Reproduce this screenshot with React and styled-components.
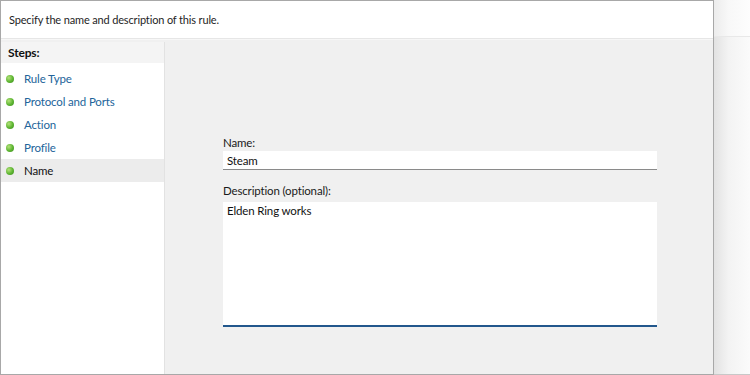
import React from "react";
import styled, { createGlobalStyle } from "styled-components";

const Global = createGlobalStyle`
  html, body { margin: 0; padding: 0; background: #fff; }
  body { font-family: "Lato", "Noto Sans", sans-serif; font-size: 11px; letter-spacing: -0.15px; color: #1a1a1a; }
`;

const Screen = styled.div`
  width: 750px;
  height: 375px;
  display: flex;
  overflow: hidden;
  box-sizing: border-box;
`;

const Dialog = styled.div`
  width: 714px;
  height: 375px;
  box-sizing: border-box;
  border: 1px solid #a8a8a8;
  display: flex;
  flex-direction: column;
  background: #f0f0f0;
`;

const Header = styled.div`
  height: 37px;
  flex: none;
  background: #fff;
  border-bottom: 1px solid #e6e6e6;
  box-shadow: 0 1px 0 #f7f7f7;
  display: flex;
  align-items: center;
  padding-left: 8px;
  color: #1e1e1e;
  font-size: 11px;
`;

const Body = styled.div`
  flex: 1;
  display: flex;
  padding-top: 3px;
  min-height: 0;
`;

const Steps = styled.div`
  width: 163px;
  flex: none;
  background: #fff;
  border-right: 1px solid #e2e2e2;
  display: flex;
  flex-direction: column;
`;

const StepsTitle = styled.div`
  height: 21px;
  background: #f4f4f4;
  display: flex;
  align-items: center;
  padding-left: 7px;
  font-weight: bold;
  font-size: 12px;
  color: #111;
  margin-bottom: 4px;
`;

const StepRow = styled.div`
  height: 23px;
  display: flex;
  align-items: center;
  padding-left: 5px;
  gap: 10px;
  background: ${(p) => (p.$active ? "#ececec" : "transparent")};
  color: ${(p) => (p.$active ? "#111" : "#22649a")};
  font-size: 11.5px;
`;

const Dot = styled.span`
  width: 8px;
  height: 8px;
  border-radius: 50%;
  background: radial-gradient(circle at 35% 35%, #b4e27a 0%, #5cb431 55%, #3d8a1f 100%);
  flex: none;
`;

const Main = styled.div`
  flex: 1;
  padding: 94px 0 0 58px;
  display: flex;
  flex-direction: column;
`;

const Label = styled.div`
  font-size: 11.5px;
  color: #1a1a1a;
  height: 14px;
  line-height: 14px;
  margin-bottom: ${(p) => p.$gap}px;
`;

const Input = styled.div`
  width: 434px;
  height: 19px;
  box-sizing: border-box;
  background: #fff;
  border-bottom: 1px solid #8a8a8a;
  padding: 3px 4px 2px;
  font-size: 11.5px;
  color: #111;
  margin-bottom: 14px;
`;

const TextArea = styled.div`
  width: 434px;
  height: 125px;
  box-sizing: border-box;
  background: #fff;
  border-bottom: 2px solid #22578c;
  padding: 2px 4px;
  font-size: 11.5px;
  color: #111;
`;

const Side = styled.div`
  flex: 1;
  height: 375px;
  display: flex;
  flex-direction: column;
  border-bottom: 1px solid #c8c8c8;
  box-sizing: border-box;
  background: linear-gradient(90deg, #e2e2e2 0%, #f3f3f3 40%, #fbfbfb 100%);
`;

const SideTop = styled.div`
  height: 36px;
  border-bottom: 1px solid #e8e8e8;
  background: linear-gradient(90deg, #ececec 0%, #f8f8f8 40%, #fdfdfd 100%);
`;

const steps = ["Rule Type", "Protocol and Ports", "Action", "Profile", "Name"];

export default function App() {
  return (
    <>
      <Global />
      <Screen>
        <Dialog>
          <Header>Specify the name and description of this rule.</Header>
          <Body>
            <Steps>
              <StepsTitle>Steps:</StepsTitle>
              {steps.map((s) => (
                <StepRow key={s} $active={s === "Name"}>
                  <Dot />
                  {s}
                </StepRow>
              ))}
            </Steps>
            <Main>
              <Label $gap={1}>Name:</Label>
              <Input>Steam</Input>
              <Label $gap={4}>Description (optional):</Label>
              <TextArea>Elden Ring works</TextArea>
            </Main>
          </Body>
        </Dialog>
        <Side>
          <SideTop />
        </Side>
      </Screen>
    </>
  );
}
